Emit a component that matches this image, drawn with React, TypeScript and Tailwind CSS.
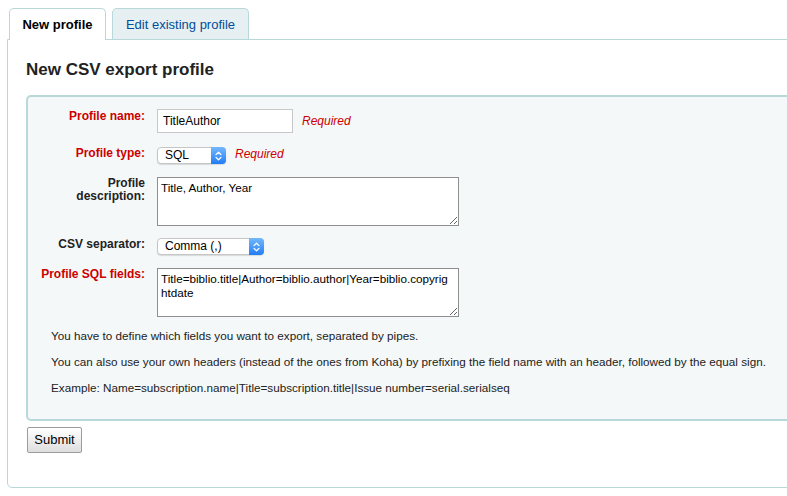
import { useState } from 'react';

const TEAL = 'border-[#b9d8d9]';

function Chevrons() {
  return (
    <svg width="7" height="10" viewBox="0 0 7 10" fill="none" stroke="white" strokeWidth={1.3} strokeLinecap="round" strokeLinejoin="round">
      <path d="M1 3.6 L3.5 1.2 L6 3.6" />
      <path d="M1 6.4 L3.5 8.8 L6 6.4" />
    </svg>
  );
}

function FakeSelect({ options, widthClass }: { options: string[]; widthClass: string }) {
  const [value, setValue] = useState(options[0]);
  return (
    <div className={`relative flex h-[17px] items-center ${widthClass} rounded-[4px] border border-[#c6c6c6] bg-white shadow-[0_1px_1px_rgba(0,0,0,0.12)]`}>
      <span className="pl-[7px] text-[12px] leading-[15px] text-black">{value}</span>
      <span className="pointer-events-none absolute -top-px -right-px -bottom-px flex w-[15px] items-center justify-center rounded-r-[4px] bg-gradient-to-b from-[#73b8fc] to-[#1f7df4]">
        <Chevrons />
      </span>
      {/* real select kept invisible on top so it still works */}
      <select
        value={value}
        onChange={(e) => setValue(e.target.value)}
        className="absolute inset-0 h-full w-full cursor-pointer appearance-none opacity-0"
      >
        {options.map((o) => (
          <option key={o}>{o}</option>
        ))}
      </select>
    </div>
  );
}

function Label({ children, required }: { children: React.ReactNode; required?: boolean }) {
  return (
    <label
      className={`w-[117px] shrink-0 text-right text-[12px] font-bold leading-[13px] ${
        required ? 'text-[#cc0000]' : 'text-[#222]'
      }`}
    >
      {children}
    </label>
  );
}

function Required({ className = '' }: { className?: string }) {
  return <span className={`ml-[9px] block text-[12px] italic leading-[14px] text-[#cc0000] ${className}`}>Required</span>;
}

export default function App() {
  const [tab, setTab] = useState<'new' | 'edit'>('new');

  return (
    <div className="h-[496px] w-[787px] overflow-hidden bg-white pl-[7px] pt-[8px] font-['Liberation_Sans',Arial,sans-serif] text-[#222]">
      {/* Tabs */}
      <div className="ml-[2px] flex items-end gap-[6px]">
        <button
          onClick={() => setTab('new')}
          className={`relative z-10 -mb-px flex h-[32px] w-[97px] items-center justify-center rounded-t-[5px] border border-b-0 ${TEAL} bg-white text-[13px] font-bold leading-[15px] text-black`}
        >
          New profile
        </button>
        <button
          onClick={() => setTab('edit')}
          className={`flex h-[31px] w-[137px] items-center justify-center rounded-t-[5px] border border-b-0 ${TEAL} bg-[#e6f0f2] text-[13px] leading-[15px] text-[#004d99]`}
        >
          Edit existing profile
        </button>
      </div>

      {/* Panel */}
      <div className={`w-[830px] rounded-b-[5px] border ${TEAL} pb-[34px] pl-[18px] pt-[20px]`}>
        <h1 className="text-[17px] font-bold leading-[20px] text-[#222]">New CSV export profile</h1>

        <div className="mt-[15px] w-[800px] rounded-[5px] border-2 border-[#b9d8d9] bg-[#f4f8f9] pb-[24px] pt-[12px]">
          <div className="flex h-[24px] items-start">
            <Label required>
              <span className="block pt-px">Profile name:</span>
            </Label>
            <input
              defaultValue="TitleAuthor"
              className="ml-[12px] h-[24px] w-[136px] border border-[#c8c8c8] bg-white px-[5px] text-[12px] text-black outline-none"
            />
            <Required className="self-center" />
          </div>

          <div className="mt-[14px] flex h-[17px] items-start">
            <Label required>Profile type:</Label>
            <div className="ml-[12px]">
              <FakeSelect options={['SQL', 'MARC']} widthClass="w-[69px]" />
            </div>
            <Required className="self-start" />
          </div>

          <div className="mt-[13px] flex items-start">
            <Label>
              Profile
              <br />
              description:
            </Label>
            <textarea
              spellCheck={false}
              defaultValue="Title, Author, Year"
              className="ml-[12px] h-[49px] w-[302px] border border-[#8f8f8f] bg-white px-[3px] pt-[3px] text-[11.7px] leading-[14px] text-black outline-none"
            />
          </div>

          <div className="mt-[12px] flex h-[17px] items-start">
            <Label>CSV separator:</Label>
            <div className="ml-[12px]">
              <FakeSelect options={['Comma (,)', 'Semicolon (;)', 'Tab', 'Space']} widthClass="w-[107px]" />
            </div>
          </div>

          <div className="mt-[13px] flex items-start">
            <Label required>Profile SQL fields:</Label>
            <textarea
              spellCheck={false}
              defaultValue={'Title=biblio.title|Author=biblio.author|Year=biblio.copyrig\nhtdate'}
              className="ml-[12px] h-[49px] w-[302px] border border-[#8f8f8f] bg-white px-[3px] pt-[3px] text-[11.7px] leading-[14px] text-black outline-none"
            />
          </div>

          <div className="mt-[12px] flex flex-col gap-[12px] pl-[23px] text-[11.7px] leading-[14px] text-[#222]">
            <p>You have to define which fields you want to export, separated by pipes.</p>
            <p>
              You can also use your own headers (instead of the ones from Koha) by prefixing the field name with an
              header, followed by the equal sign.
            </p>
            <p>Example: Name=subscription.name|Title=subscription.title|Issue number=serial.serialseq</p>
          </div>
        </div>

        <button className="ml-px mt-[6px] h-[26px] w-[55px] rounded-[2px] border border-[#9c9c9c] bg-gradient-to-b from-white to-[#dedede] text-[13px] text-black">
          Submit
        </button>
      </div>
    </div>
  );
}
